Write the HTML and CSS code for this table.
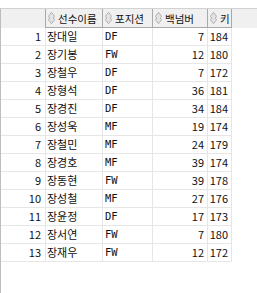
FILE: index.html
```html
<!DOCTYPE html>
<html lang="ko">
<head>
<meta charset="utf-8">
<link rel="stylesheet" href="styles.css">
</head>
<body>
<div class="grid">
  <div class="row head">
    <div class="hc blank"></div>
    <div class="hc"><svg class="sort" viewBox="0 0 8 14" width="7" height="14"><path d="M4 0.5 L7.5 5 L6 7 L7.5 9 L4 13.5 L0.5 9 L2 7 L0.5 5 Z" fill="#e4e4e4" stroke="#a8a8a8" stroke-width="1"/></svg><span>선수이름</span></div>
    <div class="hc"><svg class="sort" viewBox="0 0 8 14" width="7" height="14"><path d="M4 0.5 L7.5 5 L6 7 L7.5 9 L4 13.5 L0.5 9 L2 7 L0.5 5 Z" fill="#e4e4e4" stroke="#a8a8a8" stroke-width="1"/></svg><span>포지션</span></div>
    <div class="hc"><svg class="sort" viewBox="0 0 8 14" width="7" height="14"><path d="M4 0.5 L7.5 5 L6 7 L7.5 9 L4 13.5 L0.5 9 L2 7 L0.5 5 Z" fill="#e4e4e4" stroke="#a8a8a8" stroke-width="1"/></svg><span>백넘버</span></div>
    <div class="hc"><svg class="sort" viewBox="0 0 8 14" width="7" height="14"><path d="M4 0.5 L7.5 5 L6 7 L7.5 9 L4 13.5 L0.5 9 L2 7 L0.5 5 Z" fill="#e4e4e4" stroke="#a8a8a8" stroke-width="1"/></svg><span>키</span></div>
  </div>
  <div class="row"><div class="c idx">1</div><div class="c name">장대일</div><div class="c pos">DF</div><div class="c num">7</div><div class="c ht">184</div></div>
  <div class="row"><div class="c idx">2</div><div class="c name">장기봉</div><div class="c pos">FW</div><div class="c num">12</div><div class="c ht">180</div></div>
  <div class="row"><div class="c idx">3</div><div class="c name">장철우</div><div class="c pos">DF</div><div class="c num">7</div><div class="c ht">172</div></div>
  <div class="row"><div class="c idx">4</div><div class="c name">장형석</div><div class="c pos">DF</div><div class="c num">36</div><div class="c ht">181</div></div>
  <div class="row"><div class="c idx">5</div><div class="c name">장경진</div><div class="c pos">DF</div><div class="c num">34</div><div class="c ht">184</div></div>
  <div class="row"><div class="c idx">6</div><div class="c name">장성욱</div><div class="c pos">MF</div><div class="c num">19</div><div class="c ht">174</div></div>
  <div class="row"><div class="c idx">7</div><div class="c name">장철민</div><div class="c pos">MF</div><div class="c num">24</div><div class="c ht">179</div></div>
  <div class="row"><div class="c idx">8</div><div class="c name">장경호</div><div class="c pos">MF</div><div class="c num">39</div><div class="c ht">174</div></div>
  <div class="row"><div class="c idx">9</div><div class="c name">장동현</div><div class="c pos">FW</div><div class="c num">39</div><div class="c ht">178</div></div>
  <div class="row"><div class="c idx">10</div><div class="c name">장성철</div><div class="c pos">MF</div><div class="c num">27</div><div class="c ht">176</div></div>
  <div class="row"><div class="c idx">11</div><div class="c name">장윤정</div><div class="c pos">DF</div><div class="c num">17</div><div class="c ht">173</div></div>
  <div class="row"><div class="c idx">12</div><div class="c name">장서연</div><div class="c pos">FW</div><div class="c num">7</div><div class="c ht">180</div></div>
  <div class="row"><div class="c idx">13</div><div class="c name">장재우</div><div class="c pos">FW</div><div class="c num">12</div><div class="c ht">172</div></div>
</div>
</body>
</html>
```
FILE: styles.css
```css
html, body {
  margin: 0;
  padding: 0;
  background: #ffffff;
}
body {
  font-family: "Noto Sans CJK KR", "Noto Sans", sans-serif;
  font-size: 11px;
  color: #101010;
  height: 293px;
  overflow: hidden;
}
.grid {
  margin-top: 8px;
  border-top: 1px solid #d2d2d2;
  border-left: 1px solid #bdbdbd;
  height: 284px;
}
.row {
  display: grid;
  grid-template-columns: 45px 57px 50px 55px 24px;
  height: 18px;
}
.row.head {
  height: 19px;
  background: #f0f0f0;
}
.hc {
  box-sizing: border-box;
  display: flex;
  align-items: center;
  gap: 3px;
  padding-left: 2px;
  border-right: 1px solid #a9a9a9;
  border-bottom: 1px solid #a9a9a9;
  background: #f0f0f0;
  line-height: 17px;
  font-size: 10.5px;
  white-space: nowrap;
  overflow: hidden;
}
.hc.blank {
  border-bottom: none;
  border-right: 1px solid #a9a9a9;
}
.sort {
  flex: none;
}
.c {
  box-sizing: border-box;
  border-right: 1px solid #e6e6e6;
  border-bottom: 1px solid #e6e6e6;
  line-height: 17px;
  white-space: nowrap;
  overflow: hidden;
}
.idx {
  text-align: right;
  padding-right: 4px;
}
.name {
  padding-left: 1px;
}
.pos {
  padding-left: 2px;
  font-family: "DejaVu Sans Mono", monospace;
  font-size: 10.5px;
}
.num {
  text-align: right;
  padding-right: 3px;
}
.ht {
  text-align: right;
  padding-right: 3px;
}
```
